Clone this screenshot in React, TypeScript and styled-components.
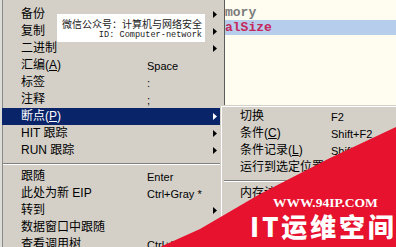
import styled, { createGlobalStyle } from 'styled-components';

const GlobalStyle = createGlobalStyle`
  html, body {
    margin: 0;
    padding: 0;
  }
  body {
    overflow: hidden;
    background: #fffcf0;
  }
`;

// whole captured area
const Screen = styled.div`
  position: relative;
  width: 396px;
  height: 247px;
  overflow: hidden;
  background: #fffcf0;
  font-family: "Liberation Sans", "Noto Sans CJK SC", sans-serif;
`;

// code editor behind the context menu
const Editor = styled.div`
  display: flex;
  flex-direction: column;
  padding-top: 5px;
  font-family: "Liberation Mono", "DejaVu Sans Mono", monospace;
  font-size: 13px;
  font-weight: 700;
`;

const CodeLine = styled.div<{ $color: string; $selected?: boolean }>`
  height: 15px;
  line-height: 15px;
  padding-left: 225px;
  color: ${(p) => p.$color};
  background: ${(p) => (p.$selected ? '#b6cdeb' : 'transparent')};
`;

// popup menus
const Menu = styled.div`
  position: absolute;
  top: 0;
  left: 0;
  bottom: -20px;
  width: 222px;
  padding-top: 6px;
  background: #d4d0c8;
  border-left: 2px solid #dedcd6;
  border-right: 1px solid #5c5c5c;
  box-shadow: inset 1px 0 #8a8a8a;
`;

const SubMenu = styled.div`
  position: absolute;
  top: 105px;
  left: 220px;
  right: -20px;
  bottom: -20px;
  padding: 2px;
  background: #d4d0c8;
  border: 1px solid;
  border-color: #d4d0c8 #404040 #404040 #d4d0c8;
  box-shadow: inset 1px 1px #fff, inset -1px -1px #808080;
`;

const Row = styled.div<{ $active?: boolean; $labelWidth: number; $indent: number }>`
  display: grid;
  grid-template-columns: ${(p) => p.$labelWidth}px 1fr auto;
  align-items: center;
  height: 17px;
  padding: 0 7px 0 ${(p) => p.$indent}px;
  background: ${(p) => (p.$active ? '#0a246a' : 'transparent')};
  color: ${(p) => (p.$active ? '#fff' : '#000')};
`;

const Label = styled.span`
  font-size: 12px;
  line-height: 17px;
  white-space: nowrap;

  u {
    text-decoration-thickness: 1px;
    text-underline-offset: 1px;
  }
`;

const Shortcut = styled.span`
  font-size: 11px;
  white-space: nowrap;
`;

const Arrow = styled.svg`
  display: block;
  width: 4px;
  height: 7px;
  fill: currentColor;
`;

const Separator = styled.div`
  display: flex;
  align-items: center;
  height: 9px;

  &::before {
    content: '';
    flex: 1;
    margin: 0 1px;
    border-top: 1px solid #808080;
    border-bottom: 1px solid #fff;
  }
`;

// white caption pasted over the menu
const InfoBox = styled.div`
  position: absolute;
  top: 14px;
  left: 57px;
  width: 148px;
  height: 28px;
  box-sizing: border-box;
  padding: 4px 3px 0 5px;
  background: #fff;
  color: #222;
  display: flex;
  flex-direction: column;
`;

const InfoTitle = styled.div`
  font-family: "Noto Sans CJK SC", sans-serif;
  font-size: 10px;
  line-height: 12px;
  white-space: nowrap;
`;

const InfoId = styled.div`
  font-family: "Liberation Mono", monospace;
  font-size: 8.6px;
  line-height: 11px;
  text-align: right;
  white-space: nowrap;
`;

// red corner watermark
const Watermark = styled.div`
  position: absolute;
  inset: 0;
  background: #e6122e;
  clip-path: polygon(160px 247px, 200px 229px, 260px 194px, 330px 158px, 396px 127px, 396px 247px);
  pointer-events: none;
`;

const MarkText = styled.div`
  position: absolute;
  left: 250px;
  top: 195px;
  width: 146px;
  display: flex;
  flex-direction: column;
  color: #fff;
`;

const MarkUrl = styled.div`
  font-family: "Liberation Serif", serif;
  font-weight: 700;
  font-size: 13.5px;
  line-height: 15px;
  padding-left: 23px;
  white-space: nowrap;
`;

const MarkName = styled.div`
  font-family: "Noto Sans CJK SC", sans-serif;
  font-weight: 900;
  font-size: 26px;
  line-height: 32px;
  letter-spacing: 2.8px;
  white-space: nowrap;
`;

type Item =
  | { sep: true }
  | { sep?: false; label: React.ReactNode; key?: string; sub?: boolean; active?: boolean };

const mainItems: Item[] = [
  { label: '备份', sub: true },
  { label: '复制', sub: true },
  { label: '二进制', sub: true },
  { label: <>汇编(<u>A</u>)</>, key: 'Space' },
  { label: '标签', key: ':' },
  { label: '注释', key: ';' },
  { label: <>断点(<u>P</u>)</>, sub: true, active: true },
  { label: 'HIT 跟踪', sub: true },
  { label: 'RUN 跟踪', sub: true },
  { sep: true },
  { label: '跟随', key: 'Enter' },
  { label: '此处为新 EIP', key: 'Ctrl+Gray *' },
  { label: '转到', sub: true },
  { label: '数据窗口中跟随' },
  { label: '查看调用树', key: 'Ctrl+K' },
];

const breakItems: Item[] = [
  { label: '切换', key: 'F2' },
  { label: <>条件(<u>C</u>)</>, key: 'Shift+F2' },
  { label: <>条件记录(<u>L</u>)</>, key: 'Shift+F4' },
  { label: '运行到选定位置', key: 'F4' },
  { sep: true },
  { label: '内存访问' },
  { label: '内存写入' },
  { label: '硬件访问' },
];

const MenuRows = ({ items, labelWidth, indent }: { items: Item[]; labelWidth: number; indent: number }) => (
  <>
    {items.map((it, i) =>
      it.sep ? (
        <Separator key={i} />
      ) : (
        <Row key={i} $active={it.active} $labelWidth={labelWidth} $indent={indent}>
          <Label>{it.label}</Label>
          <Shortcut>{it.key}</Shortcut>
          {it.sub ? (
            <Arrow viewBox="0 0 4 7">
              <path d="M0 0 L4 3.5 L0 7 Z" />
            </Arrow>
          ) : (
            <span />
          )}
        </Row>
      )
    )}
  </>
);

const App = () => (
  <Screen>
    <GlobalStyle />
    <Editor>
      <CodeLine $color="#7c7c7c">mory</CodeLine>
      <CodeLine $color="#c4285c" $selected>
        alSize
      </CodeLine>
    </Editor>

    <Menu>
      <MenuRows items={mainItems} labelWidth={126} indent={19} />
    </Menu>

    <SubMenu>
      <MenuRows items={breakItems} labelWidth={91} indent={17} />
    </SubMenu>

    <InfoBox>
      <InfoTitle>微信公众号：计算机与网络安全</InfoTitle>
      <InfoId>ID: Computer-network</InfoId>
    </InfoBox>

    <Watermark>
      <MarkText>
        <MarkUrl>WWW.94IP.COM</MarkUrl>
        <MarkName>IT运维空间</MarkName>
      </MarkText>
    </Watermark>
  </Screen>
);

export default App;
